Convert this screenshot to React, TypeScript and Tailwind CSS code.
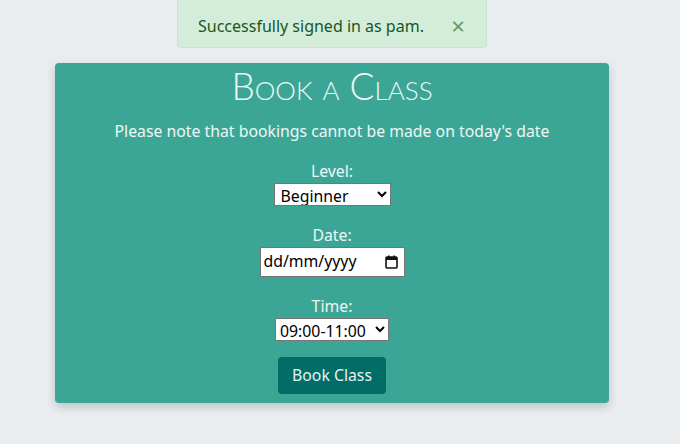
import React from "react";

export default function App() {
  return (
    <div className="w-[680px] h-[444px] bg-[#eaedf0] overflow-hidden relative" style={{ fontFamily: "'Noto Sans', Lato, sans-serif" }}>
      <div className="absolute left-[177px] top-[-4px] w-[310px] h-[52px] bg-[#d4edda] border border-[#c3e6cb] rounded-[4px] flex items-center pl-[20px] pt-[8px] text-[#155724] text-[16px]">
        <span>Successfully signed in as pam.</span>
        <span className="absolute right-[21px] top-[17px] text-[#5e9a70] text-[24px] leading-none">×</span>
      </div>
      <div className="pt-[63px] pl-[55px]">
        <div className="w-[554px] h-[340px] bg-[#3ca696] rounded-[4px] shadow-[0_4px_10px_rgba(0,0,0,0.18)] flex flex-col items-center text-[#eef7f5] text-[15.8px]">
          <h1 className="mt-[0px] text-[37px] font-light leading-[46px]" style={{ fontFamily: "Lato, sans-serif", fontVariant: "small-caps" }}>Book a Class</h1>
          <p className="mt-[12px] leading-[20px]">Please note that bookings cannot be made on today's date</p>
          <label className="mt-[20px] leading-[20px]">Level:</label>
          <select className="mt-[2px] w-[117px] h-[23px] bg-white text-black border border-[#767676] px-[2px]" defaultValue="Beginner">
            <option>Beginner</option>
          </select>
          <label className="mt-[19px] leading-[20px]">Date:</label>
          <div className="mt-[2px] w-[145px] h-[30px] bg-white text-black border border-[#767676] pl-[3px] pr-[6px] flex items-center justify-between">
            <span>dd/mm/yyyy</span>
            <svg width="13" height="14" viewBox="0 0 13 14">
              <rect x="1" y="2" width="11" height="11" rx="1" fill="none" stroke="#111" strokeWidth="1.6" />
              <rect x="1" y="2" width="11" height="3" fill="#111" />
              <rect x="3" y="0.5" width="1.6" height="3" fill="#111" />
              <rect x="8.4" y="0.5" width="1.6" height="3" fill="#111" />
            </svg>
          </div>
          <label className="mt-[19px] leading-[20px]">Time:</label>
          <select className="mt-[2px] w-[114px] h-[23px] bg-white text-black border border-[#767676]" defaultValue="09:00-11:00">
            <option>09:00-11:00</option>
          </select>
          <button className="mt-[16px] w-[108px] h-[37px] bg-[#006d66] rounded-[4px] text-[#e6f3f1]">Book Class</button>
        </div>
      </div>
    </div>
  );
}
